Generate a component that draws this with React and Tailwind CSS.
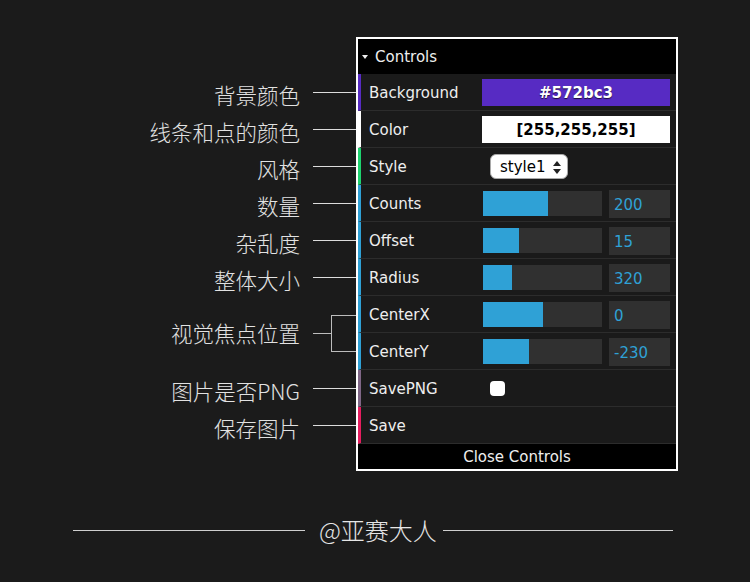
import React from 'react';

const cjk = { fontFamily: '"Noto Sans CJK SC", "Noto Sans", sans-serif' };
const ui = { fontFamily: '"DejaVu Sans", Verdana, sans-serif' };

const notes = [
  { text: '背景颜色' },
  { text: '线条和点的颜色' },
  { text: '风格' },
  { text: '数量' },
  { text: '杂乱度' },
  { text: '整体大小' },
  { text: '视觉焦点位置', bracket: true },
  { text: '图片是否PNG' },
  { text: '保存图片' },
];

const sliders = [
  { name: 'Counts', value: '200', fill: 65 },
  { name: 'Offset', value: '15', fill: 36 },
  { name: 'Radius', value: '320', fill: 29 },
  { name: 'CenterX', value: '0', fill: 60 },
  { name: 'CenterY', value: '-230', fill: 46 },
];

const Note = ({ text, bracket }) => {
  if (bracket) {
    return (
      <div className="h-[74px] flex items-center justify-end">
        <span className="text-[21.5px] font-light text-[#e2e2e2] leading-none mr-[13px]" style={cjk}>{text}</span>
        <div className="w-[18px] h-px bg-[#bdbdbd]" />
        <div className="w-[25px] h-[37px] border-l border-y border-[#bdbdbd]" />
      </div>
    );
  }
  return (
    <div className="h-[37px] flex items-center justify-end">
      <span className="pt-[4px] text-[21.5px] font-light text-[#e2e2e2] leading-none mr-[13px]" style={cjk}>{text}</span>
      <div className="w-[43px] h-px bg-[#dcdcdc]" />
    </div>
  );
};

const Row = ({ stripe, label, children }) => (
  <div className={`h-[37px] flex items-center border-b border-[#2c2c2c] border-l-[3px] ${stripe}`}>
    <div className="w-[121px] pl-[8px] pt-[3px] text-[15px] text-[#eeeeee]" style={ui}>{label}</div>
    <div className="flex-1 flex items-center pr-[6px] pt-[1px]">{children}</div>
  </div>
);

export default function App() {
  return (
    <div className="w-[750px] h-[582px] bg-[#1b1b1b] flex flex-col">
      <div className="flex pt-[37px]">
        <div className="w-[356px] pt-[37px] flex flex-col">
          {notes.map((n) => (
            <Note key={n.text} {...n} />
          ))}
        </div>

        <div className="w-[322px] border-2 border-white bg-[#1a1a1a]">
          <div className="h-[35px] bg-black flex items-center pl-[4px] pt-[2px] text-[15px] text-[#eeeeee]" style={ui}>
            <svg width="6" height="5" viewBox="0 0 6 5" className="mr-[7px]">
              <path d="M0 0 L6 0 L3 4 Z" fill="#eeeeee" />
            </svg>
            Controls
          </div>

          <Row stripe="border-l-[#572bc3]" label="Background">
            <div
              className="w-full h-[27px] bg-[#572bc3] flex items-center justify-center pt-[2px] text-[15px] font-bold text-white"
              style={{ ...ui, textShadow: '0 1px 1px rgba(0,0,0,0.7)' }}
            >
              #572bc3
            </div>
          </Row>

          <Row stripe="border-l-white" label="Color">
            <div className="w-full h-[27px] bg-white flex items-center justify-center pt-[2px] text-[15px] font-bold text-black" style={ui}>
              [255,255,255]
            </div>
          </Row>

          <Row stripe="border-l-[#1ed36f]" label="Style">
            <div className="ml-[8px] w-[78px] h-[25px] bg-white border border-[#a9a9a9] rounded-md flex items-center justify-between pl-[9px] pr-[6px] pt-[1px] text-[15px] text-black" style={ui}>
              <span>style1</span>
              <svg width="8" height="13" viewBox="0 0 8 13">
                <path d="M4 0 L8 5 L0 5 Z" fill="#222" />
                <path d="M0 8 L8 8 L4 13 Z" fill="#222" />
              </svg>
            </div>
          </Row>

          {sliders.map((s) => (
            <Row key={s.name} stripe="border-l-[#2fa1d6]" label={s.name}>
              <div className="ml-[1px] w-[119px] h-[25px] bg-[#303030] flex">
                <div className="h-full bg-[#2fa1d6]" style={{ width: s.fill }} />
              </div>
              <div className="ml-[7px] flex-1 h-[28px] bg-[#303030] flex items-center pl-[5px] pt-[3px] text-[15px] text-[#2fa1d6]" style={ui}>
                {s.value}
              </div>
            </Row>
          ))}

          <Row stripe="border-l-[#806787]" label="SavePNG">
            <div className="ml-[8px] w-[15px] h-[15px] bg-white rounded-[4px]" />
          </Row>

          <Row stripe="border-l-[#e61d5f]" label="Save" />

          <div className="h-[25px] bg-black flex items-center justify-center pt-[2px] text-[15px] text-[#eeeeee]" style={ui}>
            Close Controls
          </div>
        </div>
      </div>

      <div className="mt-[47px] flex items-center pl-[73px]">
        <div className="w-[232px] h-px bg-[#cfcfcf]" />
        <span className="ml-[14px] mr-[6px] text-[24px] font-light leading-none text-[#e6e6e6]" style={cjk}>@亚赛大人</span>
        <div className="w-[230px] h-px bg-[#cfcfcf]" />
      </div>
    </div>
  );
}
